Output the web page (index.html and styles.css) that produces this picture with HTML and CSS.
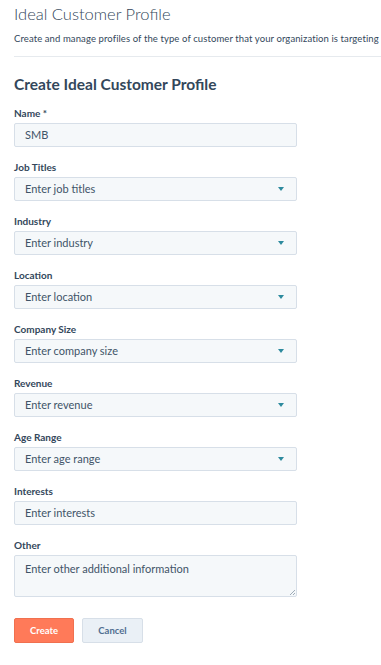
FILE: index.html
```html
<html>
<head>
<title>Ideal Customer Profile</title>
<link rel="stylesheet" href="styles.css">
</head>
<body>

<div class='page'>
  <div class='header'>
    <h1>Ideal Customer Profile</h1>
    <p>Create and manage profiles of the type of customer that your organization is targeting</p>
  </div>

  <form class='form'>
    <h2>Create Ideal Customer Profile</h2>

    <div class='field'>
      <label>Name *</label>
      <div class='input'>SMB</div>
    </div>
    <div class='field'>
      <label>Job Titles</label>
      <div class='input select'><span>Enter job titles</span><i class='caret'></i></div>
    </div>
    <div class='field'>
      <label>Industry</label>
      <div class='input select'><span>Enter industry</span><i class='caret'></i></div>
    </div>
    <div class='field'>
      <label>Location</label>
      <div class='input select'><span>Enter location</span><i class='caret'></i></div>
    </div>
    <div class='field'>
      <label>Company Size</label>
      <div class='input select'><span>Enter company size</span><i class='caret'></i></div>
    </div>
    <div class='field'>
      <label>Revenue</label>
      <div class='input select'><span>Enter revenue</span><i class='caret'></i></div>
    </div>
    <div class='field'>
      <label>Age Range</label>
      <div class='input select'><span>Enter age range</span><i class='caret'></i></div>
    </div>
    <div class='field'>
      <label>Interests</label>
      <div class='input'>Enter interests</div>
    </div>
    <div class='field'>
      <label>Other</label>
      <div class='input area'>Enter other additional information
        <svg class='grip' width='6' height='6' viewBox='0 0 6 6'><path d='M6 1 L1 6 M6 4 L4 6' stroke='#8a99a8' stroke-width='0.8'/></svg>
      </div>
    </div>

    <div class='buttons'>
      <div class='btn create'>Create</div>
      <div class='btn cancel'>Cancel</div>
    </div>
  </form>
</div>

</body>
</html>
```
FILE: styles.css
```css
body{
  margin:0px;
  background:#fff;
  font-family:Lato, "Open Sans", sans-serif;
  color:#33475b;
}

.page{
  padding:0px 0px 0px 14px;
}

.header{
  border-bottom:1px solid #e6eaee;
  padding:3px 0px 11px 0px;
}
.header h1{
  font-size:16.5px;
  font-weight:300;
  margin:0px;
  line-height:22px;
}
.header p{
  font-size:9.5px;
  margin:8px 0px 0px 0px;
  line-height:12px;
  white-space:nowrap;
  letter-spacing:0.1px;
}

.form{
  margin:0px;
  padding:17px 0px 0px 0px;
}
.form h2{
  font-size:15.5px;
  font-weight:700;
  margin:0px 0px 13px 0px;
  line-height:20px;
}

.field{
  width:283px;
  margin-bottom:14px;
}
.field label{
  display:block;
  font-size:10px;
  font-weight:700;
  line-height:12px;
  margin-bottom:4px;
}
.input{
  height:24px;
  box-sizing:border-box;
  border:1px solid #d7dfe8;
  border-radius:2px;
  background:#f5f8fa;
  padding:0px 10px;
  font-size:11px;
  line-height:22px;
  color:#3f5468;

  display:flex;
  align-items:center;
  justify-content:space-between;
}
.input .caret{
  width:0px;
  height:0px;
  border-left:3.5px solid transparent;
  border-right:3.5px solid transparent;
  border-top:4px solid #2d8a9e;
  margin-right:2px;
}
.input.area{
  height:42px;
  align-items:flex-start;
  padding-top:2px;
  position:relative;
}
.input.area .grip{
  position:absolute;
  right:1px;
  bottom:1px;
}

.buttons{
  display:flex;
  gap:8px;
  padding-top:7px;
}
.btn{
  height:25px;
  box-sizing:border-box;
  border-radius:2px;
  font-size:9.5px;
  font-weight:700;
  line-height:23px;
  text-align:center;
}
.btn.create{
  width:60px;
  background:#ff7a59;
  border:1px solid #f0704f;
  color:#fff;
}
.btn.cancel{
  width:61px;
  background:#eaf0f6;
  border:1px solid #d7dfe8;
  color:#506e91;
}
```
